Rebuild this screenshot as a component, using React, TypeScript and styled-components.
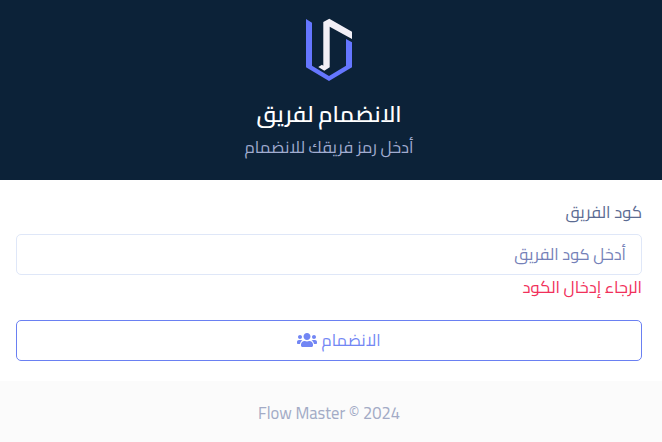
import styled, { createGlobalStyle } from "styled-components";
import { FaUsers } from "react-icons/fa";

const GlobalStyle = createGlobalStyle`
  *, *::before, *::after { box-sizing: border-box; }
  body {
    margin: 0;
    background: #fff;
    font-family: Cairo, "Noto Sans", "DejaVu Sans", sans-serif;
    font-size: 16.5px;
    line-height: 24px;
  }
`;

const Page = styled.main`
  display: flex;
  flex-direction: column;
  height: 442px;
  overflow: hidden;
`;

const Header = styled.header`
  display: flex;
  flex-direction: column;
  align-items: center;
  height: 180px;
  padding: 18px 4px 0 0;
  background: #0c2238;
`;

const Logo = styled.svg`
  display: block;
  width: 48px;
  height: 64px;
`;

const Title = styled.h1`
  margin: 17px 0 0;
  color: #fff;
  font-size: 22.5px;
  font-weight: 600;
  line-height: 30px;
`;

const Subtitle = styled.p`
  margin: 6px 0 0;
  color: #a1acd0;
`;

const Form = styled.form`
  display: flex;
  flex-direction: column;
  height: 201px;
  padding: 20px 20px 0 16px;
`;

const Label = styled.label`
  color: #5b6b92;
`;

const CodeInput = styled.input`
  height: 41px;
  margin: 10px 0 0;
  padding: 0 15px 2px;
  border: 1px solid #dfe7f8;
  border-radius: 5px;
  outline: none;
  background: #fff;
  font: inherit;
  font-size: 16.3px;
  &::placeholder { color: #7581b8; opacity: 1; }
`;

const ErrorText = styled.p`
  margin: 0;
  color: #f1305a;
  font-size: 16.6px;
`;

const JoinButton = styled.button`
  display: flex;
  align-items: center;
  justify-content: center;
  gap: 4px;
  height: 41px;
  margin: 21px 0 0;
  padding: 0 0 2px 20px;
  border: 1px solid #6a80f2;
  border-radius: 5px;
  background: #fff;
  color: #7286f4;
  font: inherit;
  font-size: 16.3px;
`;

const UsersIcon = styled(FaUsers)`
  width: 20px;
  height: 16px;
`;

const Footer = styled.footer`
  flex: 1;
  padding: 20px 4px 0 0;
  background: #fbfbfb;
  color: #a3abc6;
  text-align: center;
`;

export default function App() {
  return (
    <>
      <GlobalStyle />
      <Page dir="rtl">
        <Header>
          <Logo viewBox="0 0 48 64" aria-hidden="true">
            <path fill="#6576ff" d="M1 1 7 4.700V47.700L24 58 41 47.700V21L47 24.300V49.300L24 63 1 49.300Z" />
            <path fill="#f2f0f7" d="M18.300 4 24.300 .7 47 13.700V21L24.700 8.700V49.300L19.300 52.700 13.300 49 17 46.700 18.300 47.700Z" />
          </Logo>
          <Title>الانضمام لفريق</Title>
          <Subtitle>أدخل رمز فريقك للانضمام</Subtitle>
        </Header>
        <Form noValidate>
          <Label htmlFor="team-code">كود الفريق</Label>
          <CodeInput id="team-code" placeholder="أدخل كود الفريق" />
          <ErrorText>الرجاء إدخال الكود</ErrorText>
          <JoinButton type="button">
            <span>الانضمام</span>
            <UsersIcon aria-hidden="true" />
          </JoinButton>
        </Form>
        <Footer dir="ltr">Flow Master © 2024</Footer>
      </Page>
    </>
  );
}
